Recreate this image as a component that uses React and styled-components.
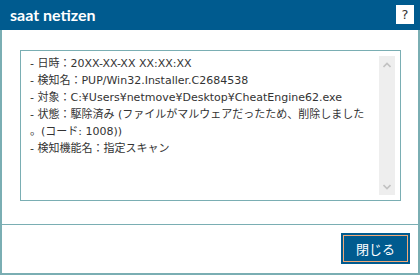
import React from "react";
import styled, { createGlobalStyle } from "styled-components";

const BLUE = "#005b8f";
const TEAL = "#7aaeb3";

const Global = createGlobalStyle`
  html, body { margin: 0; padding: 0; background: #ffffff; }
  * { box-sizing: border-box; }
`;

const Window = styled.div`
  width: 420px;
  height: 275px;
  display: flex;
  flex-direction: column;
  background: #ffffff;
  overflow: hidden;
`;

const TitleBar = styled.div`
  height: 30px;
  flex: none;
  background: ${BLUE};
  display: flex;
  align-items: center;
  justify-content: space-between;
  padding: 0 6px 0 10px;
`;

const Title = styled.div`
  font-family: "Lato", "DejaVu Sans", sans-serif;
  font-weight: 700;
  font-size: 16px;
  color: #ffffff;
  padding-bottom: 1px;
`;

const HelpButton = styled.div`
  width: 18px;
  height: 19px;
  background: #ffffff;
  color: #333333;
  display: flex;
  align-items: center;
  justify-content: center;
  font-family: "DejaVu Sans", sans-serif;
  font-size: 13px;
  margin-bottom: 1px;
`;

const Frame = styled.div`
  flex: 1;
  display: flex;
  flex-direction: column;
  border: 2px solid ${TEAL};
  border-top: none;
`;

const Body = styled.div`
  height: 195px;
  padding: 20px 17px 24px 18px;
  border-bottom: 1px solid ${TEAL};
`;

const LogBox = styled.div`
  height: 151px;
  border: 1px solid ${TEAL};
  display: flex;
`;

const LogText = styled.div`
  flex: 1;
  padding: 4px 0 0 9px;
  font-family: "DejaVu Sans", "Noto Sans CJK JP", sans-serif;
  font-size: 11px;
  line-height: 17px;
  color: #333333;
  text-spacing-trim: space-all;
`;

const Line = styled.div`
  white-space: nowrap;
`;

const Scrollbar = styled.div`
  width: 16px;
  margin: 5px 5px 5px 0;
  background: #eeeeee;
  display: flex;
  flex-direction: column;
  align-items: center;
  justify-content: space-between;
  padding: 6px 0 5px;
`;

const Footer = styled.div`
  flex: 1;
  display: flex;
  justify-content: flex-end;
  align-items: flex-start;
  padding: 8px 8px 0 0;
`;

const CloseButton = styled.button`
  width: 69px;
  height: 31px;
  background: ${BLUE};
  border: 2px solid ${BLUE};
  outline: 1px solid #f2a978;
  outline-offset: -3px;
  color: #ffffff;
  font-family: "Noto Sans CJK JP", sans-serif;
  font-size: 13px;
  padding: 0;
  margin: 0;
  display: flex;
  align-items: center;
  justify-content: center;
  cursor: pointer;
`;

const Chevron = ({ up }) => (
  <svg width="8" height="6" viewBox="0 0 8 6">
    <path
      d={up ? "M0.5 5 L4 1.5 L7.5 5" : "M0.5 1 L4 4.5 L7.5 1"}
      fill="none"
      stroke="#c2c2c2"
      strokeWidth="1.6"
    />
  </svg>
);

const lines = [
  "- 日時：20XX-XX-XX XX:XX:XX",
  "- 検知名：PUP/Win32.Installer.C2684538",
  "- 対象：C:¥Users¥netmove¥Desktop¥CheatEngine62.exe",
  "- 状態：駆除済み (ファイルがマルウェアだったため、削除しました",
  "。(コード: 1008))",
  "- 検知機能名：指定スキャン",
];

export default function App() {
  return (
    <>
      <Global />
      <Window>
        <TitleBar>
          <Title>saat netizen</Title>
          <HelpButton>?</HelpButton>
        </TitleBar>
        <Frame>
          <Body>
            <LogBox>
              <LogText>
                {lines.map((l, i) => (
                  <Line key={i}>{l}</Line>
                ))}
              </LogText>
              <Scrollbar>
                <Chevron up />
                <Chevron />
              </Scrollbar>
            </LogBox>
          </Body>
          <Footer>
            <CloseButton>閉じる</CloseButton>
          </Footer>
        </Frame>
      </Window>
    </>
  );
}
